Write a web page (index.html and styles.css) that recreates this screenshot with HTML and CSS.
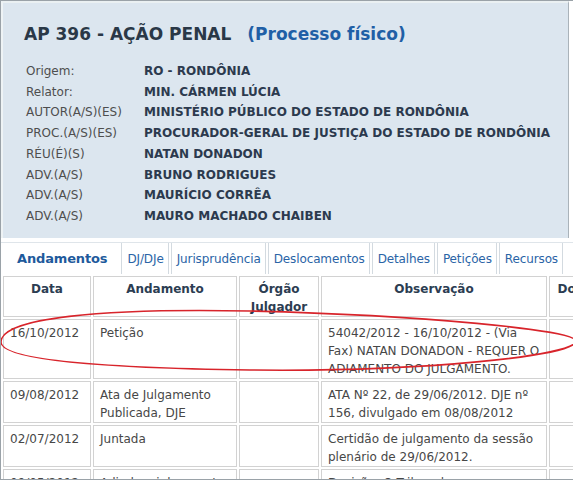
FILE: index.html
```html
<!DOCTYPE html>
<html lang="pt-br">

<head>
    <meta charset="UTF-8">
    <meta name="viewport" content="width=device-width, initial-scale=1.0">
    <title>AP 396 - Acompanhamento Processual</title>
    <link rel="stylesheet" href="styles.css">
</head>

<body>

    <div class="moldura">
        <div class="cabecalho">
            <h1>AP 396 - AÇÃO PENAL <span class="fisico">(Processo físico)</span></h1>
            <div class="partes">
                <span class="rotulo">Origem:</span><span class="valor">RO - RONDÔNIA</span>
                <span class="rotulo">Relator:</span><span class="valor">MIN. CÁRMEN LÚCIA</span>
                <span class="rotulo">AUTOR(A/S)(ES)</span><span class="valor">MINISTÉRIO PÚBLICO DO ESTADO DE RONDÔNIA</span>
                <span class="rotulo">PROC.(A/S)(ES)</span><span class="valor">PROCURADOR-GERAL DE JUSTIÇA DO ESTADO DE RONDÔNIA</span>
                <span class="rotulo">RÉU(É)(S)</span><span class="valor">NATAN DONADON</span>
                <span class="rotulo">ADV.(A/S)</span><span class="valor">BRUNO RODRIGUES</span>
                <span class="rotulo">ADV.(A/S)</span><span class="valor">MAURÍCIO CORRÊA</span>
                <span class="rotulo">ADV.(A/S)</span><span class="valor">MAURO MACHADO CHAIBEN</span>
            </div>
        </div>

        <ul class="abas">
            <li class="ativa">Andamentos</li>
            <li>DJ/DJe</li>
            <li>Jurisprudência</li>
            <li>Deslocamentos</li>
            <li>Detalhes</li>
            <li>Petições</li>
            <li>Recursos</li>
        </ul>

        <table class="andamentos">
            <tr>
                <th class="c-data">Data</th>
                <th class="c-and">Andamento</th>
                <th class="c-org">Órgão Julgador</th>
                <th class="c-obs">Observação</th>
                <th class="c-doc">Documento</th>
            </tr>
            <tr>
                <td>16/10/2012</td>
                <td>Petição</td>
                <td></td>
                <td>54042/2012 - 16/10/2012 - (Via Fax) NATAN DONADON - REQUER O ADIAMENTO DO JULGAMENTO.</td>
                <td></td>
            </tr>
            <tr>
                <td>09/08/2012</td>
                <td>Ata de Julgamento Publicada, DJE</td>
                <td></td>
                <td>ATA Nº 22, de 29/06/2012. DJE nº 156, divulgado em 08/08/2012</td>
                <td></td>
            </tr>
            <tr>
                <td>02/07/2012</td>
                <td>Juntada</td>
                <td></td>
                <td>Certidão de julgamento da sessão plenário de 29/06/2012.</td>
                <td></td>
            </tr>
            <tr>
                <td>09/05/2012</td>
                <td>Adiado o julgamento</td>
                <td></td>
                <td>Decisão: O Tribunal, por unanimidade, adiou o julgamento.</td>
                <td></td>
            </tr>
        </table>

        <!-- marcação em vermelho sobre o primeiro andamento -->
        <svg class="destaque" width="573" height="480" viewBox="0 0 573 480">
            <path d="M 576,341 C 576,330 420,315 250,311 C 100,308 1,318 1,342 C 1,360 100,368 250,370 C 420,372 576,356 576,341 Z"
                fill="none" stroke="#d8242b" stroke-width="1.6" />
        </svg>
    </div>

</body>

</html>
```

FILE: styles.css
```css
body {
    margin: 0;
    font-family: "DejaVu Sans", Verdana, sans-serif;
    font-size: 12px;
    background-color: #fff;
}

.moldura {
    position: relative;
    width: 573px;
    height: 480px;
    box-sizing: border-box;
    border-left: 1px solid #9aa2a8;
    border-top: 1px solid #9aa2a8;
    border-bottom: 1px solid #9aa2a8;
    overflow: hidden;
}

.cabecalho {
    width: 568px;
    box-sizing: border-box;
    background-color: #dce6ef;
    border-top: 2px solid #eaf0f2;
    border-left: 2px solid #eef3f5;
    border-right: 1px solid #aab3ba;
    padding: 20px 0 11px 21px;
}

h1 {
    margin: 0;
    font-size: 17px;
    line-height: 22px;
    color: #2a3847;
}

.fisico {
    color: #1f5fa6;
    margin-left: 10px;
}

.partes {
    display: grid;
    grid-template-columns: 118px auto;
    margin: 16px 0 0 2px;
    line-height: 20.7px;
}

.rotulo {
    color: #4e4e4e;
}

.valor {
    color: #2c3a4e;
    font-weight: bold;
}

.abas {
    display: flex;
    list-style: none;
    margin: 4px 0 0;
    padding: 0;
    height: 31px;
    line-height: 32px;
    border-top: 1px solid #dfe5ea;
}

.abas li {
    color: #2a64a6;
    padding: 0 4px 0 5px;
    border-left: 1px solid #d3dae0;
    border-right: 1px solid #d3dae0;
    margin-right: 2px;
    letter-spacing: -0.12px;
    white-space: nowrap;
}

.abas li.ativa {
    color: #1e5a9c;
    font-weight: bold;
    font-size: 13px;
    letter-spacing: -0.15px;
    border: none;
    padding: 0 12px 0 16px;
}

.andamentos {
    border-collapse: separate;
    border-spacing: 2px;
    table-layout: fixed;
    width: 644px;
}

.andamentos th,
.andamentos td {
    border: 1px solid #d2d2d2;
    box-sizing: border-box;
    vertical-align: top;
    line-height: 18px;
}

.andamentos th {
    padding: 3px 4px 0;
    color: #2c3d52;
    text-align: center;
}

.andamentos td {
    padding: 4px 1px 0 6px;
    color: #474747;
}

.c-data {
    width: 88px;
}

.c-and {
    width: 144px;
}

.c-org {
    width: 80px;
}

.c-obs {
    width: 226px;
}

.c-doc {
    width: 94px;
}

.destaque {
    position: absolute;
    left: -1px;
    top: -1px;
    pointer-events: none;
}
```
